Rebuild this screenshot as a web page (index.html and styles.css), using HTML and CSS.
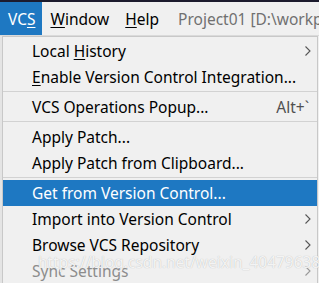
FILE: index.html
```html
<!DOCTYPE html>
<html>
<head>
<meta charset="utf-8">
<link rel="stylesheet" href="styles.css">
</head>
<body>
<div class="topstrip"></div>
<div class="menubar">
  <span class="mb-item active">VC<u>S</u></span>
  <span class="mb-item"><u>W</u>indow</span>
  <span class="mb-item"><u>H</u>elp</span>
  <span class="title">Project01 [D:\workp</span>
</div>
<div class="stage">
  <div class="editor-edge"></div>
  <div class="popup">
    <div class="item"><span class="label">Local <u>H</u>istory</span><svg class="chev" width="6" height="10" viewBox="0 0 6 10"><polyline points="0.5,0.5 5,5 0.5,9.5" fill="none" stroke="#555" stroke-width="1.1"/></svg></div>
    <div class="item"><span class="label"><u>E</u>nable Version Control Integration...</span></div>
    <div class="sep"></div>
    <div class="item"><span class="label">VCS Operations Popup...</span><span class="shortcut">Alt+`</span></div>
    <div class="sep"></div>
    <div class="item"><span class="label">Apply Patch...</span></div>
    <div class="item"><span class="label">Apply Patch from Clipboard...</span></div>
    <div class="sep"></div>
    <div class="item selected"><span class="label">Get from Version Control...</span></div>
    <div class="item"><span class="label">Import into Version Control</span><svg class="chev" width="6" height="10" viewBox="0 0 6 10"><polyline points="0.5,0.5 5,5 0.5,9.5" fill="none" stroke="#555" stroke-width="1.1"/></svg></div>
    <div class="item"><span class="label">Browse VCS Repository</span><svg class="chev" width="6" height="10" viewBox="0 0 6 10"><polyline points="0.5,0.5 5,5 0.5,9.5" fill="none" stroke="#555" stroke-width="1.1"/></svg></div>
    <div class="item disabled"><span class="label">Sync Settings</span><svg class="chev" width="6" height="10" viewBox="0 0 6 10"><polyline points="0.5,0.5 5,5 0.5,9.5" fill="none" stroke="#999" stroke-width="1.1"/></svg></div>
    <div class="watermark">https://blog.csdn.net/weixin_40479638</div>
  </div>
</div>
</body>
</html>
```

FILE: styles.css
```css
* { box-sizing: border-box; }
html, body { margin: 0; padding: 0; }
body {
  width: 319px;
  height: 283px;
  overflow: hidden;
  background: #f0f0f0;
  font-family: "Noto Sans", "Open Sans", sans-serif;
  font-size: 15.5px;
  color: #000;
}
u { text-decoration: underline; text-underline-offset: 2px; text-decoration-thickness: 1px; }
.topstrip { height: 2px; background: #1c1b2e; }
.menubar {
  height: 34px;
  display: flex;
  align-items: stretch;
  background: #f0f0f0;
  border-bottom: 1px solid #dadada;
}
.mb-item {
  display: flex;
  align-items: center;
  padding: 0 8px 0 8px;
  color: #000;
}
.mb-item.active {
  padding-right: 7px;
  background: #1e78c2;
  color: #fff;
}
.title {
  display: flex;
  align-items: center;
  color: #707070;
  white-space: nowrap;
  margin-left: 11px;
}
.stage {
  display: flex;
  height: 248px;
}
.editor-edge {
  width: 2px;
  background: #e4e4e4;
}
.popup {
  position: relative;
  flex: 1;
  background: #f0f0f0;
  border-top: 1px solid #c8c8c8;
  border-left: 1px solid #c8c8c8;
  border-right: 1px solid #c8c8c8;
  padding-top: 1px;
  margin-right: 1px;
}
.item {
  height: 26px;
  display: flex;
  align-items: center;
  padding-left: 29px;
  padding-right: 6px;
  white-space: nowrap;
}
.label { flex: 1; }
.shortcut { color: #505050; margin-right: 2px; }
.item.selected { background: #1e78c2; color: #fff; }
.item.disabled { color: #8c8c8c; }
.sep {
  height: 4px;
  padding-top: 1px;
}
.sep::before {
  content: "";
  display: block;
  height: 1px;
  background: #d2d2d2;
}
.watermark {
  position: absolute;
  left: 35px;
  top: 214px;
  font-size: 15.5px;
  color: rgba(255,255,255,0.85);
  text-shadow: 0 0 1px #b0b0b0;
  white-space: nowrap;
}
```
